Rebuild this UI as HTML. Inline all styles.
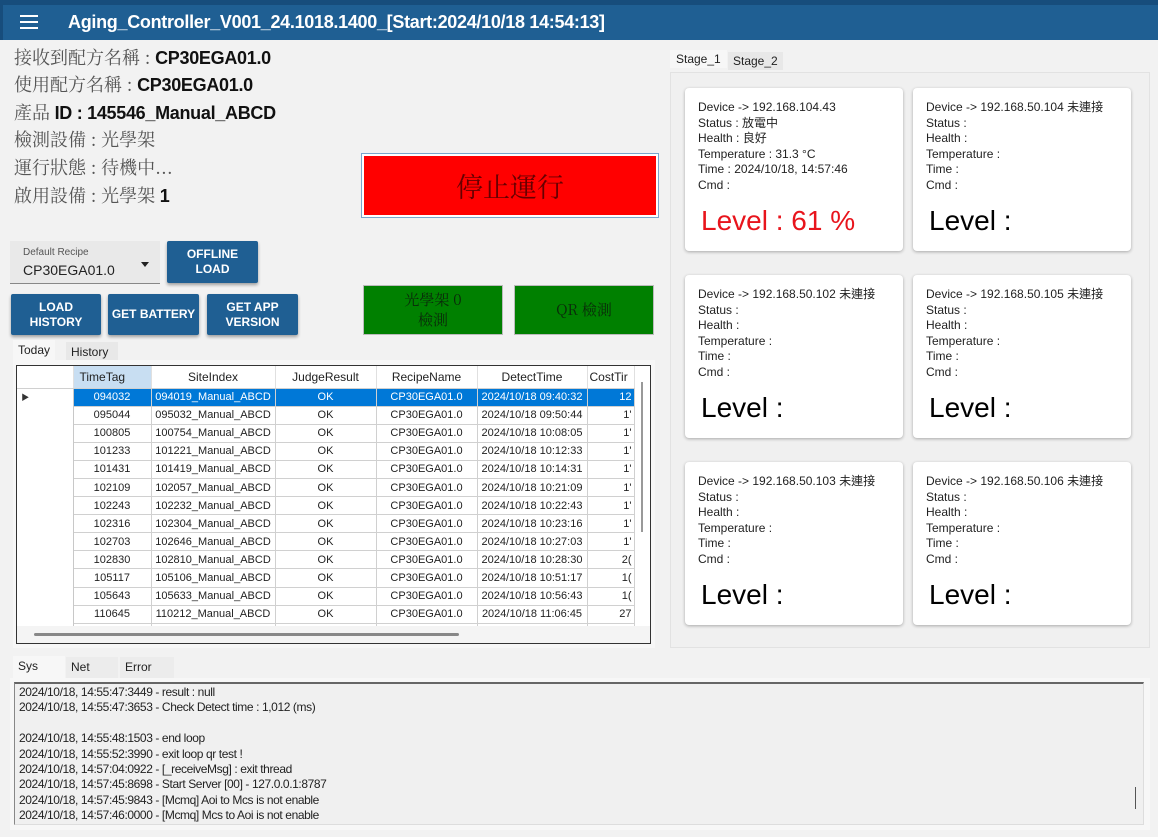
<!DOCTYPE html>
<html><head><meta charset="utf-8"><style>
*{margin:0;padding:0;box-sizing:border-box}
body{width:1158px;height:837px;background:#f2f2f2;position:relative;overflow:hidden;font-family:"Liberation Sans","Noto Sans CJK TC",sans-serif;color:#222}
.a{position:absolute}
.bar{left:0;top:0;width:1158px;height:40px;background:#1f5f93;border-top:5px solid #174d7c;border-left:3px solid #174d7c}
.title{left:68px;top:12px;color:#fff;font-size:18px;font-weight:bold;white-space:nowrap;letter-spacing:-0.3px}
.info{left:14px;font-size:18px;color:#555;white-space:nowrap;font-family:"Noto Serif CJK SC","Liberation Sans",serif}
.info b{color:#111;font-family:"Liberation Sans",sans-serif;letter-spacing:-0.3px}
.btn{background:#1f5f93;color:#fff;font-size:12px;font-weight:bold;text-align:center;display:flex;align-items:center;justify-content:center;line-height:15px;border-radius:2px;box-shadow:0 2px 3px rgba(0,0,0,.35)}
.green{background:#008000;border:1px solid #bbb;color:#0a2a0a;font-size:15px;display:flex;align-items:center;justify-content:center;text-align:center;line-height:20px;font-family:"Noto Serif CJK SC",serif}
.tab{font-size:12px;padding:3px 5px;color:#222}
table{border-collapse:collapse;font-size:11px;table-layout:fixed}
td,th{border-right:1px solid #d0d0d0;border-bottom:1px solid #d0d0d0;height:18.1px;text-align:center;white-space:nowrap;overflow:hidden;font-weight:normal;padding:0 2px}
th{height:22px;font-size:12px;background:#fff;border-right:1px solid #e0e0e0}
td.rh{border-right:1px solid #c8c8c8;border-bottom:none}
tr.sel td{background:#0078d7;color:#fff}
tr.sel td.rh{background:#fff;color:#333}
.card{background:#fff;width:218px;height:163px;border-radius:4px;box-shadow:0 1px 3px rgba(0,0,0,.3);font-size:12px;line-height:15.5px;padding:12px 0 0 13px;color:#222}
.card .lv{position:absolute;left:16px;top:116px;font-size:28px;line-height:34px;color:#000}
.log{font-size:12px;line-height:15.4px;color:#222;letter-spacing:-0.4px;font-family:"Liberation Sans Narrow","Liberation Sans",sans-serif}
</style></head><body>
<div class="a bar"></div>
<div class="a" style="left:20px;top:15px;width:18px;height:2px;background:#fff;box-shadow:0 6px 0 #fff,0 12px 0 #fff"></div>
<div class="a title">Aging_Controller_V001_24.1018.1400_[Start:2024/10/18 14:54:13]</div>

<div class="a info" style="top:44px">接收到配方名稱 : <b>CP30EGA01.0</b></div>
<div class="a info" style="top:71px">使用配方名稱 : <b>CP30EGA01.0</b></div>
<div class="a info" style="top:99px">產品 <b>ID : 145546_Manual_ABCD</b></div>
<div class="a info" style="top:126px">檢測設備 : 光學架</div>
<div class="a info" style="top:154px">運行狀態 : 待機中...</div>
<div class="a info" style="top:182px">啟用設備 : 光學架 <b>1</b></div>

<div class="a" style="left:362px;top:154px;width:296px;height:63px;background:#ff0000;border:2px solid #fff;outline:1px solid #7aa5cc;display:flex;align-items:center;justify-content:center;font-size:27px;color:#600;font-family:'Noto Serif CJK SC',serif">停止運行</div>

<div class="a" style="left:10px;top:241px;width:150px;height:43px;background:#e9e9e9;border-bottom:1px solid #888">
<div class="a" style="left:13px;top:6px;font-size:10px;color:#555">Default Recipe</div>
<div class="a" style="left:13px;top:21px;font-size:14px;color:#222">CP30EGA01.0</div>
<div class="a" style="left:131px;top:21px;width:0;height:0;border-left:4px solid transparent;border-right:4px solid transparent;border-top:5px solid #222"></div>
</div>
<div class="a btn" style="left:167px;top:241px;width:91px;height:42px">OFFLINE<br>LOAD</div>
<div class="a btn" style="left:11px;top:294px;width:90px;height:41px">LOAD<br>HISTORY</div>
<div class="a btn" style="left:108px;top:294px;width:91px;height:41px">GET BATTERY</div>
<div class="a btn" style="left:207px;top:294px;width:91px;height:41px">GET APP<br>VERSION</div>
<div class="a green" style="left:363px;top:285px;width:140px;height:50px">光學架 0<br>檢測</div>
<div class="a green" style="left:514px;top:285px;width:140px;height:50px">QR 檢測</div>

<div class="a tab" style="left:13px;top:340px;background:#f7f7f7">Today</div>
<div class="a tab" style="left:66px;top:342px;background:#e8e8e8;width:52px">History</div>
<div class="a" style="left:13px;top:360px;width:642px;height:288px;background:#f7f7f7"></div>
<div class="a" style="left:16px;top:365px;width:635px;height:279px;border:1px solid #333;background:#fff;overflow:hidden">
<table style="width:617px">
<colgroup><col style="width:56px"><col style="width:78px"><col style="width:124px"><col style="width:101px"><col style="width:101px"><col style="width:110px"><col style="width:47px"></colgroup>
<tr><th></th><th style="background:#c8def2;text-align:left;padding-left:6px">TimeTag</th><th>SiteIndex</th><th>JudgeResult</th><th>RecipeName</th><th>DetectTime</th><th style="text-align:left">CostTir</th></tr>
<tr class="sel"><td class="rh" style="text-align:left;font-size:8px">&nbsp;▶</td><td>094032</td><td>094019_Manual_ABCD</td><td>OK</td><td>CP30EGA01.0</td><td>2024/10/18 09:40:32</td><td style="text-align:right">12</td></tr>
<tr><td class="rh"></td><td>095044</td><td>095032_Manual_ABCD</td><td>OK</td><td>CP30EGA01.0</td><td>2024/10/18 09:50:44</td><td style="text-align:right">1'</td></tr>
<tr><td class="rh"></td><td>100805</td><td>100754_Manual_ABCD</td><td>OK</td><td>CP30EGA01.0</td><td>2024/10/18 10:08:05</td><td style="text-align:right">1'</td></tr>
<tr><td class="rh"></td><td>101233</td><td>101221_Manual_ABCD</td><td>OK</td><td>CP30EGA01.0</td><td>2024/10/18 10:12:33</td><td style="text-align:right">1'</td></tr>
<tr><td class="rh"></td><td>101431</td><td>101419_Manual_ABCD</td><td>OK</td><td>CP30EGA01.0</td><td>2024/10/18 10:14:31</td><td style="text-align:right">1'</td></tr>
<tr><td class="rh"></td><td>102109</td><td>102057_Manual_ABCD</td><td>OK</td><td>CP30EGA01.0</td><td>2024/10/18 10:21:09</td><td style="text-align:right">1'</td></tr>
<tr><td class="rh"></td><td>102243</td><td>102232_Manual_ABCD</td><td>OK</td><td>CP30EGA01.0</td><td>2024/10/18 10:22:43</td><td style="text-align:right">1'</td></tr>
<tr><td class="rh"></td><td>102316</td><td>102304_Manual_ABCD</td><td>OK</td><td>CP30EGA01.0</td><td>2024/10/18 10:23:16</td><td style="text-align:right">1'</td></tr>
<tr><td class="rh"></td><td>102703</td><td>102646_Manual_ABCD</td><td>OK</td><td>CP30EGA01.0</td><td>2024/10/18 10:27:03</td><td style="text-align:right">1'</td></tr>
<tr><td class="rh"></td><td>102830</td><td>102810_Manual_ABCD</td><td>OK</td><td>CP30EGA01.0</td><td>2024/10/18 10:28:30</td><td style="text-align:right">2(</td></tr>
<tr><td class="rh"></td><td>105117</td><td>105106_Manual_ABCD</td><td>OK</td><td>CP30EGA01.0</td><td>2024/10/18 10:51:17</td><td style="text-align:right">1(</td></tr>
<tr><td class="rh"></td><td>105643</td><td>105633_Manual_ABCD</td><td>OK</td><td>CP30EGA01.0</td><td>2024/10/18 10:56:43</td><td style="text-align:right">1(</td></tr>
<tr><td class="rh"></td><td>110645</td><td>110212_Manual_ABCD</td><td>OK</td><td>CP30EGA01.0</td><td>2024/10/18 11:06:45</td><td style="text-align:right">27</td></tr>
<tr><td class="rh"></td><td></td><td></td><td></td><td></td><td></td><td></td></tr>
</table>
<div class="a" style="left:0;top:260px;width:633px;height:18px;background:#f4f4f4"></div>
<div class="a" style="left:17px;top:267px;width:425px;height:3px;background:#888;border-radius:2px"></div>
<div class="a" style="left:624px;top:16px;width:2px;height:150px;background:#999"></div>
</div>

<div class="a" style="left:670px;top:72px;width:480px;height:576px;background:#f0f0f0;border:1px solid #e2e2e2"></div>
<div class="a tab" style="left:670px;top:50px;background:#f7f7f7;padding:2px 6px">Stage_1</div>
<div class="a tab" style="left:728px;top:52px;background:#e8e8e8;padding:2px 5px">Stage_2</div>

<div class="a card" style="left:685px;top:88px">Device -&gt; 192.168.104.43<br>Status : 放電中<br>Health : 良好<br>Temperature : 31.3 °C<br>Time : 2024/10/18, 14:57:46<br>Cmd :<div class="lv" style="color:#e8141c">Level : 61 %</div></div>
<div class="a card" style="left:913px;top:88px">Device -&gt; 192.168.50.104 未連接<br>Status :<br>Health :<br>Temperature :<br>Time :<br>Cmd :<div class="lv">Level :</div></div>
<div class="a card" style="left:685px;top:275px">Device -&gt; 192.168.50.102 未連接<br>Status :<br>Health :<br>Temperature :<br>Time :<br>Cmd :<div class="lv">Level :</div></div>
<div class="a card" style="left:913px;top:275px">Device -&gt; 192.168.50.105 未連接<br>Status :<br>Health :<br>Temperature :<br>Time :<br>Cmd :<div class="lv">Level :</div></div>
<div class="a card" style="left:685px;top:462px">Device -&gt; 192.168.50.103 未連接<br>Status :<br>Health :<br>Temperature :<br>Time :<br>Cmd :<div class="lv">Level :</div></div>
<div class="a card" style="left:913px;top:462px">Device -&gt; 192.168.50.106 未連接<br>Status :<br>Health :<br>Temperature :<br>Time :<br>Cmd :<div class="lv">Level :</div></div>

<div class="a tab" style="left:13px;top:656px;background:#f7f7f7;width:52px;height:22px">Sys</div>
<div class="a tab" style="left:66px;top:657px;background:#ececec;width:52px;height:21px">Net</div>
<div class="a tab" style="left:120px;top:657px;background:#ececec;width:54px;height:21px">Error</div>
<div class="a" style="left:10px;top:678px;width:1140px;height:152px;background:#f7f7f7"></div>
<div class="a" style="left:14px;top:682px;width:1130px;height:143px;border-top:2px solid #666;border-left:1px solid #888;border-right:1px solid #ddd;border-bottom:1px solid #ddd;background:#f0f0f0"></div>
<div class="a" style="left:1135px;top:787px;width:1px;height:22px;background:#555"></div>
<div class="a log" style="left:19px;top:685px">2024/10/18, 14:55:47:3449 - result : null<br>2024/10/18, 14:55:47:3653 - Check Detect time : 1,012 (ms)<br>&nbsp;<br>2024/10/18, 14:55:48:1503 - end loop<br>2024/10/18, 14:55:52:3990 - exit loop qr test !<br>2024/10/18, 14:57:04:0922 - [_receiveMsg] : exit thread<br>2024/10/18, 14:57:45:8698 - Start Server [00] - 127.0.0.1:8787<br>2024/10/18, 14:57:45:9843 - [Mcmq] Aoi to Mcs is not enable<br>2024/10/18, 14:57:46:0000 - [Mcmq] Mcs to Aoi is not enable</div>
</body></html>
